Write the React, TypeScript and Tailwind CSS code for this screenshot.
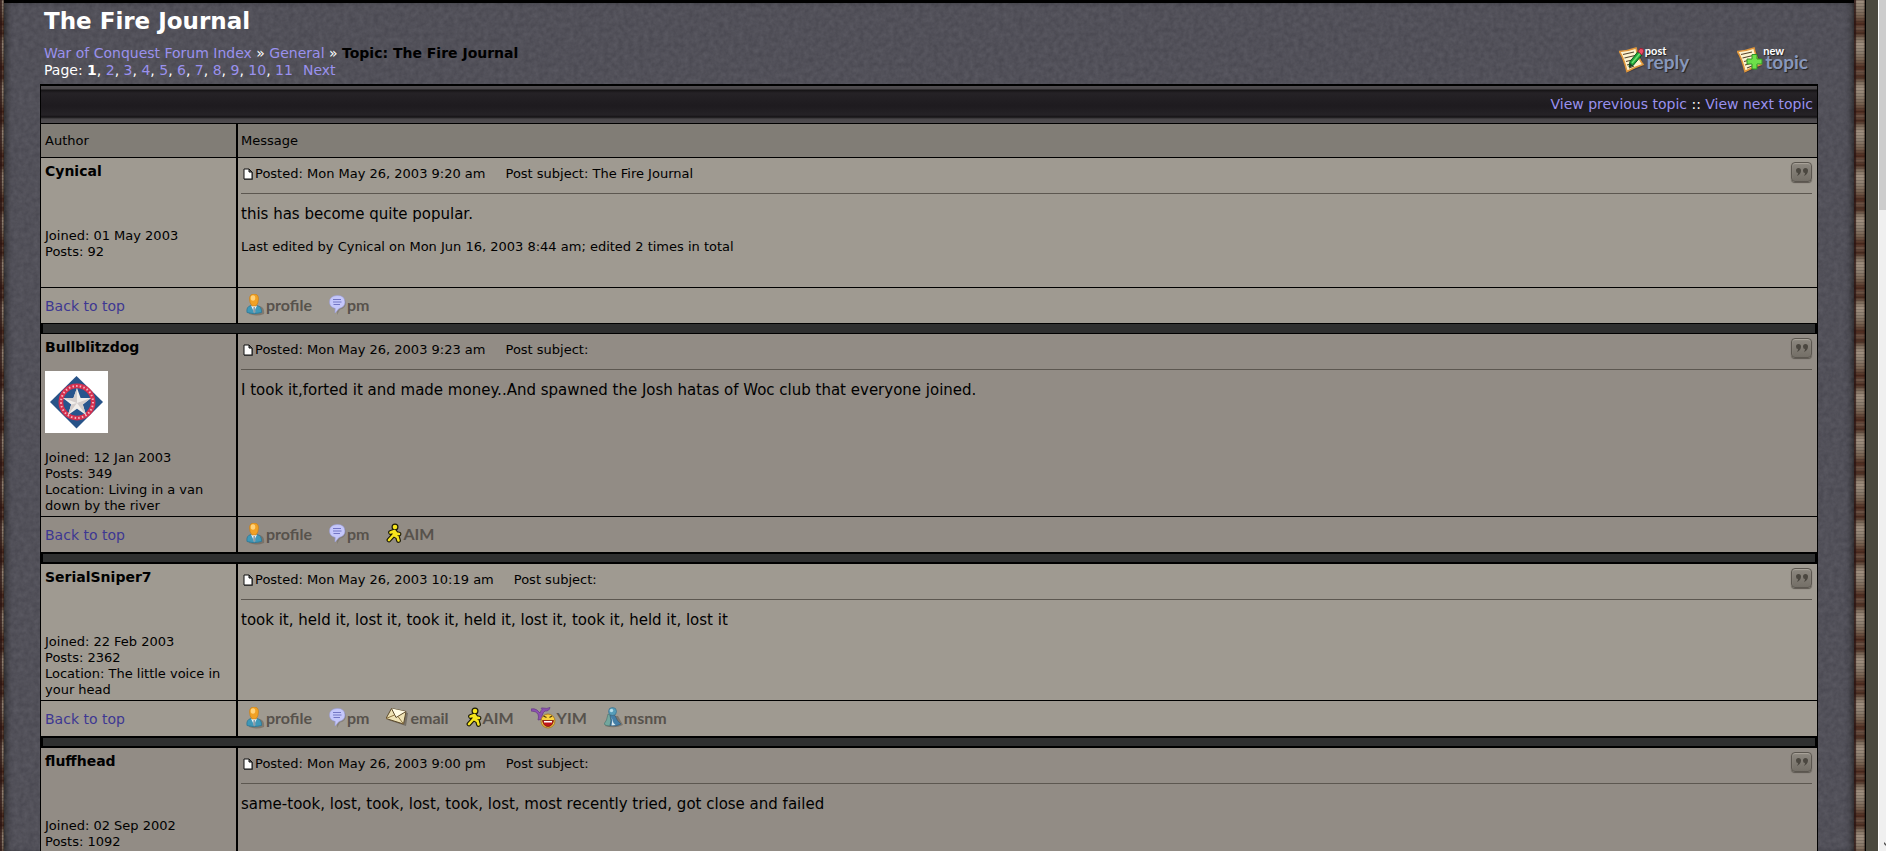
import { clsx } from 'clsx';

type Contact = 'profile' | 'pm' | 'email' | 'AIM' | 'YIM' | 'msnm';

interface Post {
  author: string;
  avatar?: boolean;
  info: string[];
  date: string;
  subject?: string;
  body: string;
  edited?: string;
  contacts: Contact[];
}

const posts: Post[] = [
  {
    author: 'Cynical',
    info: ['Joined: 01 May 2003', 'Posts: 92'],
    date: 'Mon May 26, 2003 9:20 am',
    subject: 'The Fire Journal',
    body: 'this has become quite popular.',
    edited: 'Last edited by Cynical on Mon Jun 16, 2003 8:44 am; edited 2 times in total',
    contacts: ['profile', 'pm'],
  },
  {
    author: 'Bullblitzdog',
    avatar: true,
    info: ['Joined: 12 Jan 2003', 'Posts: 349', 'Location: Living in a van down by the river'],
    date: 'Mon May 26, 2003 9:23 am',
    body: 'I took it,forted it and made money..And spawned the Josh hatas of Woc club that everyone joined.',
    contacts: ['profile', 'pm', 'AIM'],
  },
  {
    author: 'SerialSniper7',
    info: ['Joined: 22 Feb 2003', 'Posts: 2362', 'Location: The little voice in your head'],
    date: 'Mon May 26, 2003 10:19 am',
    body: 'took it, held it, lost it, took it, held it, lost it, took it, held it, lost it',
    contacts: ['profile', 'pm', 'email', 'AIM', 'YIM', 'msnm'],
  },
  {
    author: 'fluffhead',
    info: ['Joined: 02 Sep 2002', 'Posts: 1092'],
    date: 'Mon May 26, 2003 9:00 pm',
    body: 'same-took, lost, took, lost, took, lost, most recently tried, got close and failed',
    contacts: ['profile', 'pm'],
  },
];

const pages = ['2', '3', '4', '5', '6', '7', '8', '9', '10', '11'];

function Rope({ className }: { className: string }) {
  return (
    <div className={clsx('shrink-0 bg-[repeating-linear-gradient(180deg,#a09080_0px,#8b7d6e_8px,#75604f_16px,#4c2a1e_24px,#6e5547_28px,#4a2c20_33px,#7b6959_38px,#a09080_44px)]', className)}>
      <div className="h-full w-full bg-[repeating-linear-gradient(180deg,rgba(0,0,0,0.15)_0px,rgba(0,0,0,0.15)_1px,transparent_1px,transparent_3px)] shadow-[inset_2px_0_1px_rgba(40,18,16,0.8),inset_-1px_0_1px_rgba(30,15,10,0.5)]" />
    </div>
  );
}

function Grain() {
  return (
    <svg className="absolute inset-0 h-full w-full opacity-10" aria-hidden="true">
      <filter id="grain" colorInterpolationFilters="sRGB">
        <feTurbulence type="fractalNoise" baseFrequency="0.2" numOctaves="3" seed="4" />
        <feColorMatrix type="matrix" values="0.8 0 0 0 -0.07  0.8 0 0 0 -0.08  0.8 0 0 0 -0.06  0 0 0 0 1" />
      </filter>
      <rect width="100%" height="100%" filter="url(#grain)" />
    </svg>
  );
}

function NoteIcon({ kind }: { kind: 'reply' | 'topic' }) {
  return (
    <svg className="h-7 w-[26px] shrink-0" viewBox="1 0 26 28" aria-hidden="true">
      <path d="M3 7 L18 1.500 Q22 8 26 20 L9 27 Q7 17 2 9Z" fill="#2b2830" opacity=".5" />
      <path d="M1.500 5.500 Q10 5 18 2 Q20 12 25 18.500 Q17 21 9 25.500 Q6 13 1.500 5.500Z" fill="#fdf3cf" stroke="#e0963a" strokeWidth="1.500" />
      <path d="M5 8.500 16 6M6.500 12 17 9.500M8 15.500 14 14M9 19 14 17.500M11 22 16 20" stroke="#57452f" strokeWidth="1.200" />
      {kind === 'reply' ? (
        <g>
          <path d="M11 21 12 15.500 20 5.500 24 9 15.500 19Z" fill="#21a838" stroke="#0b5520" />
          <path d="M14 17 22 7.500" stroke="#6fe070" strokeWidth="1.500" />
          <path d="M20 5.500 22 2.500Q25 1.500 26 5L24 9Z" fill="#ea4c64" stroke="#9b2037" />
          <path d="M11 21 12 17 14.500 19.500Z" fill="#223d24" />
        </g>
      ) : (
        <path d="M16 8.500h5v4.500h5v5h-5v5h-5v-5h-5v-5h5z" fill="#6ee04a" stroke="#2e9327" />
      )}
    </svg>
  );
}

function TopicButton({ kind, over }: { kind: 'reply' | 'topic'; over: string }) {
  return (
    <button type="button" className="flex h-7 items-start font-['Lato',sans-serif]">
      <NoteIcon kind={kind} />
      <span className="flex flex-col items-start font-bold [text-shadow:1px_1px_1px_#222]">
        <span className="h-2 text-[11px] leading-[10px] text-white">{over}</span>
        <span className="pl-0.5 text-[19px] leading-4 text-[#8797bb]">{kind}</span>
      </span>
    </button>
  );
}

function ContactIcon({ kind }: { kind: Contact }) {
  switch (kind) {
    case 'profile':
      return (
        <svg className="h-[22px] w-5" viewBox="0 0 20 22" aria-hidden="true">
          <path d="M3 20Q1 14 6 12h8q5 2 4 8-8 3-15 0Z" fill="#5f574e" opacity=".5" />
          <path d="M1 18.500Q0 12.500 5 11.500h6q5 1 4.500 7Q8 21 1 18.500Z" fill="#3f98b8" stroke="#2b7392" strokeWidth=".7" />
          <path d="M5 11.500 8 18l3-6.500Z" fill="#eef6fa" />
          <path d="M7.500 13h1.500l.6 5-1.300 1.200L7 18Z" fill="#8b9da8" />
          <path d="M3.500 5Q3.500 0 8 0t4.500 5Q12.500 9 10 12H6Q3.500 9 3.500 5Z" fill="#f0a125" stroke="#c67b13" strokeWidth=".6" />
          <ellipse cx="7" cy="4" rx="2.300" ry="2.800" fill="#ffd27a" />
        </svg>
      );
    case 'pm':
      return (
        <svg className="h-[22px] w-[18px]" viewBox="0 0 18 22" aria-hidden="true">
          <path d="M2 8Q2 2 9 2.500t8 6q0 6-6 7l-3 5.500V16Q2 14 2 8Z" fill="#6d665f" opacity=".45" />
          <path d="M.5 8Q.5 2 8 1.500T16 8q0 5-6 6.500L6 19l.2-4.500Q.5 13 .5 8Z" fill="#c5c7fb" stroke="#9b9dd9" strokeWidth=".6" />
          <path d="M4 5.500h8M4 8h8.500M4.500 10.500H11" stroke="#7376c4" />
        </svg>
      );
    case 'email':
      return (
        <svg className="h-[22px] w-6" viewBox="0 0 24 22" aria-hidden="true">
          <path d="M2 13 8 4l14 2-2 13Z" fill="#4d463d" opacity=".5" />
          <path d="M0 11.500 5.500 1.500 20 4.500 17.500 17Z" fill="#efe3b5" stroke="#5d4a2c" />
          <path d="M5.500 1.500 10 10.500 20 4.500" fill="#fffbe4" stroke="#5d4a2c" />
          <path d="M0 11.500 8.500 8M17.500 17 12 9.500" stroke="#8b713f" />
        </svg>
      );
    case 'AIM':
      return (
        <svg className="h-[22px] w-[17px]" viewBox="0 0 17 22" aria-hidden="true">
          <g stroke="#1b1905" strokeWidth="4.800" strokeLinecap="round" strokeLinejoin="round" fill="none">
            <path d="M8.500 8 7.500 12 3 17M8 12l3.500 2 1 3.500M4.500 9.500 8.500 8l2 2.500 2.500.5" />
          </g>
          <circle cx="9" cy="4" r="3.500" fill="#1b1905" />
          <g stroke="#f7e51d" strokeWidth="2.600" strokeLinecap="round" strokeLinejoin="round" fill="none">
            <path d="M8.500 8 7.500 12 3 17M8 12l3.500 2 1 3.500M4.500 9.500 8.500 8l2 2.500 2.500.5" />
          </g>
          <circle cx="9" cy="4" r="2.300" fill="#f7e51d" />
        </svg>
      );
    case 'YIM':
      return (
        <svg className="h-[22px] w-[26px]" viewBox="1 0 26 22" aria-hidden="true">
          <path d="M1 2Q4 1 7 3l3 3Q11 3 12 2.500 10 .5 13 1q4 1 7-.5-1 4-5 3.500-2 1-3 5l1 3-5 1q1-3 0-6Q6 4 1 4Z" fill="#8c4fb0" stroke="#613684" strokeWidth=".7" />
          <circle cx="18" cy="14" r="7" fill="#f9cf3f" stroke="#a8792b" />
          <path d="M12.500 13.500h11q-1 6-5.500 6t-5.500-6Z" fill="#c3161b" stroke="#681011" strokeWidth=".7" />
          <path d="M14 14h8v1.500h-8Z" fill="#fff" />
          <path d="m13.500 9 3 1.500M22 9l-2.500 1.500" stroke="#4b3711" strokeWidth="1.300" />
        </svg>
      );
    case 'msnm':
      return (
        <svg className="h-[22px] w-5" viewBox="1 0 20 22" aria-hidden="true">
          <path d="M2 19 8 9h7l5 9q-8 4-18 1Z" fill="#5f574e" opacity=".55" />
          <path d="M5 7 8 9q1 5-1 10-4 0-6-2Q4 14 5 7Z" fill="#73a79e" stroke="#41746e" strokeWidth=".6" />
          <path d="M7 8.500h5q2 6 6 8.500-5 3-11 1.500Q9 14 7 8.500Z" fill="#447ea7" stroke="#315979" strokeWidth=".6" />
          <path d="m8.500 10 2 6 2 2-4 .5Q10 14 8.500 10Z" fill="#dceaf0" />
          <circle cx="9.500" cy="4.500" r="4" fill="#579db9" stroke="#356a86" strokeWidth=".6" />
          <circle cx="8.500" cy="3.500" r="1.700" fill="#b5dce8" />
        </svg>
      );
  }
}

function Avatar() {
  return (
    <svg className="h-[62px] w-[63px]" viewBox="0 0 63 62" role="img" aria-label="Avatar">
      <path d="M0 0h63v62H0z" fill="#fff" />
      <path d="M31.500 5 58 31 31.500 57.500 5 31Z" fill="#285388" />
      <circle cx="32" cy="31" r="16" fill="none" stroke="#d4304f" strokeWidth="5" />
      <circle cx="32" cy="31" r="16" fill="none" stroke="#f3b5c0" strokeWidth="2" strokeDasharray="1.500 2.200" />
      <circle cx="32" cy="31" r="13.500" fill="#28558d" />
      <path d="m32 17 3.600 10H46l-8.200 6.500L41 44l-9-6.200L23 44l3.200-10.500L18 27h10.400Z" fill="#f1eeeb" />
      <path d="m32 17v15l-9 12 3.200-10.500L32 32 18 27h10.400ZM46 27l-14 5 9 12-3.200-10.500Z" fill="#d3cdcc" />
    </svg>
  );
}

function PageIcon() {
  return (
    <svg className="mx-0.5 h-3 w-[10px] shrink-0" viewBox="0 0 10 12" aria-hidden="true">
      <path d="M1 1h5l3 3v7H1Z" fill="#fff" stroke="#111" />
      <path d="M6 1v3h3Z" fill="#777" stroke="#111" />
      <path d="M9.500 4v7.500H1" stroke="#333" fill="none" />
    </svg>
  );
}

function QuoteButton() {
  return (
    <button
      type="button"
      aria-label="Reply with quote"
      className="flex h-5 w-[21px] items-center justify-center rounded border border-[#5b564f] bg-linear-to-b from-[#8c877f] to-[#746f67] shadow-[inset_0_1px_1px_#aaa59c,0_1px_1px_#5b564f]"
    >
      <svg className="h-2 w-3" viewBox="0 0 12 8" aria-hidden="true">
        <path d="M0 2.500Q0 0 2.500 0T5 2.500Q5 6 1 8q1-1.500 1-3Q0 5 0 2.500ZM7 2.500Q7 0 9.500 0T12 2.500Q12 6 8 8q1-1.500 1-3-2 0-2-2.500Z" fill="#4b4740" />
      </svg>
    </button>
  );
}

function PostRows({ post, index }: { post: Post; index: number }) {
  const shade = index % 2 === 0 ? 'bg-[#9f9a91]' : 'bg-[#928c85]';
  return (
    <>
      <tr className={shade}>
        <td className="border-r-2 border-b border-black px-1 pt-1 pb-0.5 align-top">
          <b className="block text-[14px] leading-[18px]">{post.author}</b>
          {post.avatar ? <div className="pt-[15px] pb-[17px]"><Avatar /></div> : <div className="h-12" />}
          {post.info.map((line) => <div key={line} className="text-[13px] leading-4">{line}</div>)}
        </td>
        <td className="border-b border-black pt-1 pr-[5px] pl-[3px] align-top">
          <div className="flex h-8 items-start justify-between border-b border-[#5c5750] text-[13px] leading-6">
            <div className="flex items-center">
              <PageIcon />
              <span>Posted: {post.date}</span>
              <span className="pl-5">Post subject: {post.subject}</span>
            </div>
            <QuoteButton />
          </div>
          <p className="pt-2.5 text-[15px] leading-5">{post.body}</p>
          {post.edited && <p className="pt-[15px] pb-8 text-[13px] leading-4">{post.edited}</p>}
        </td>
      </tr>
      <tr className={shade}>
        <td className="h-[35px] border-r-2 border-black px-1 pt-0.5 text-[14px]">
          <a href="#top" className="text-[#3d3792]">Back to top</a>
        </td>
        <td className="px-2 pb-0.5">
          <div className="flex items-center gap-[17px]">
            {post.contacts.map((kind) => (
              <a key={kind} href={`#${kind}`} className="flex items-center">
                <ContactIcon kind={kind} />
                <span className="font-['Lato',sans-serif] text-[16px] leading-5 font-bold text-[#57524c]">{kind}</span>
              </a>
            ))}
          </div>
        </td>
      </tr>
      <tr>
        <td colSpan={2} className={clsx('border-x-2 border-black bg-[#2f3030]', index === 0 ? 'h-[11px] border-y' : 'h-3 border-y-2')} />
      </tr>
    </>
  );
}

export default function App() {
  return (
    <div className="flex h-screen overflow-hidden bg-[#52515a] font-[Verdana,'DejaVu_Sans',sans-serif] text-black">
      <Rope className="w-1" />
      <main id="top" className="relative min-w-0 flex-1 border-t-[3px] border-black px-9 shadow-[inset_6px_0_6px_-4px_#222,inset_-6px_0_6px_-4px_#222]">
        <Grain />
        <div className="relative">
          <header className="flex h-[81px] items-start justify-between px-1 pt-1">
            <div>
              <h1 className="text-[23px] leading-7 font-bold text-white">The Fire Journal</h1>
              <nav className="pt-2.5 text-[14px] leading-[17px] text-white">
                <div>
                  <a href="#index" className="text-[#9a91ee]">War of Conquest Forum Index</a> » <a href="#general" className="text-[#9a91ee]">General</a> » <b className="text-black">Topic: The Fire Journal</b>
                </div>
                <div>
                  Page: <b>1</b>
                  {pages.map((page) => <span key={page}>, <a href={`#page-${page}`} className="text-[#9a91ee]">{page}</a></span>)}
                  <a href="#next" className="pl-2.5 text-[#9a91ee]">Next</a>
                </div>
              </nav>
            </div>
            <div className="flex gap-12 pt-[39px] pr-1.5">
              <TopicButton kind="reply" over="post" />
              <TopicButton kind="topic" over="new" />
            </div>
          </header>

          <section className="border-x border-t-2 border-black">
            <div className="h-[38px] border-b border-black bg-[linear-gradient(180deg,#504d50_0px,#4a474a_3px,#151315_4px,#252226_7px,#1e1b1f_20px,#252226_29px,#151315_31px,#4a474a_33px,#504d50_37px)] px-1 text-right text-[14px] leading-9 text-white">
              <a href="#previous" className="text-[#9a91ee]">View previous topic</a> :: <a href="#following" className="text-[#9a91ee]">View next topic</a>
            </div>
            <table className="w-full table-fixed border-separate border-spacing-0">
              <colgroup>
                <col className="w-[197px]" />
                <col />
              </colgroup>
              <thead>
                <tr className="bg-[#817d76] text-left text-[13px]">
                  <th className="h-[34px] border-r-2 border-b border-black px-1 font-normal">Author</th>
                  <th className="border-b border-black px-[3px] font-normal">Message</th>
                </tr>
              </thead>
              <tbody>
                {posts.map((post, index) => <PostRows key={post.author} post={post} index={index} />)}
              </tbody>
            </table>
          </section>
        </div>
      </main>
      <Rope className="w-[11px]" />
      <div className="w-[13px] shrink-0 border-l border-black bg-[#4b493e]" />
      <div className="flex w-2 shrink-0 flex-col justify-between border-l border-white bg-[#f0f0f0]">
        <div className="h-[210px] bg-[#cdcdcd]" />
        <svg className="h-[17px] w-[7px]" viewBox="0 0 7 17" aria-hidden="true">
          <path d="M5 8l2 2v2L5 10Z" fill="#505050" />
        </svg>
      </div>
    </div>
  );
}
